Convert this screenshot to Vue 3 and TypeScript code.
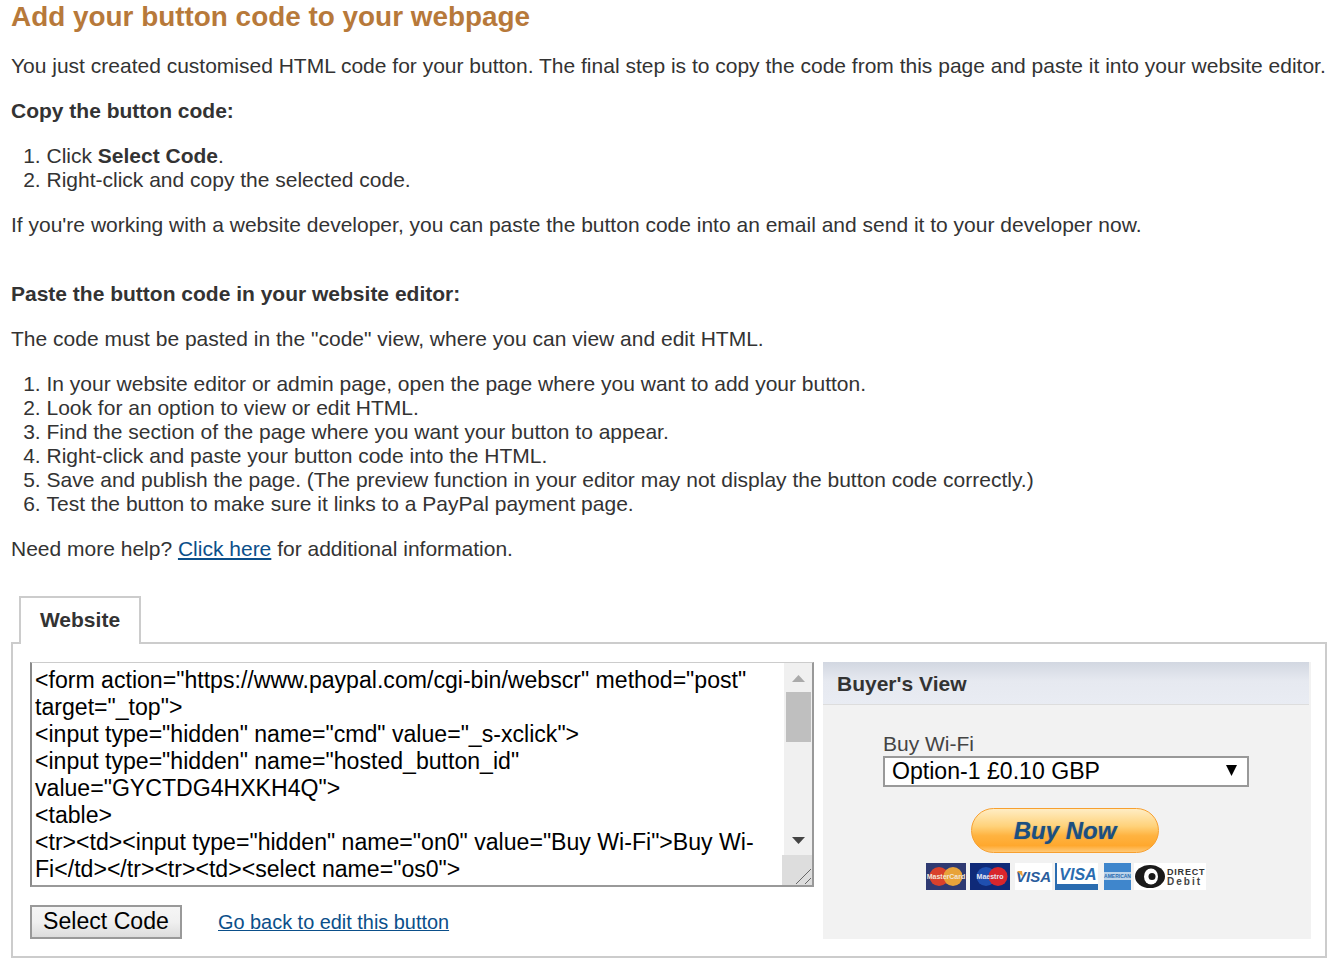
<script setup lang="ts">
const editorSteps: string[] = [
  'In your website editor or admin page, open the page where you want to add your button.',
  'Look for an option to view or edit HTML.',
  'Find the section of the page where you want your button to appear.',
  'Right-click and paste your button code into the HTML.',
  'Save and publish the page. (The preview function in your editor may not display the button code correctly.)',
  'Test the button to make sure it links to a PayPal payment page.',
]
const codeLines: string[] = [
  '<form action="https://www.paypal.com/cgi-bin/webscr" method="post"',
  'target="_top">',
  '<input type="hidden" name="cmd" value="_s-xclick">',
  '<input type="hidden" name="hosted_button_id"',
  'value="GYCTDG4HXKH4Q">',
  '<table>',
  '<tr><td><input type="hidden" name="on0" value="Buy Wi-Fi">Buy Wi-',
  'Fi</td></tr><tr><td><select name="os0">',
]
</script>

<template>
  <main class="page">
    <h1 class="title">Add your button code to your webpage</h1>
    <p>You just created customised HTML code for your button. The final step is to copy the code from this page and paste it into your website editor.</p>
    <p><strong>Copy the button code:</strong></p>
    <ol>
      <li>Click <strong>Select Code</strong>.</li>
      <li>Right-click and copy the selected code.</li>
    </ol>
    <p class="gap-after">If you're working with a website developer, you can paste the button code into an email and send it to your developer now.</p>
    <p><strong>Paste the button code in your website editor:</strong></p>
    <p>The code must be pasted in the "code" view, where you can view and edit HTML.</p>
    <ol>
      <li v-for="step in editorSteps" :key="step">{{ step }}</li>
    </ol>
    <p>Need more help? <a href="#">Click here</a> for additional information.</p>

    <div class="tabs"><div class="tab">Website</div></div>
    <section class="box">
      <div class="left">
        <div class="code">
          <div class="code-text">
            <div v-for="line in codeLines" :key="line">{{ line }}</div>
          </div>
          <div class="scrollbar">
            <svg class="arrow-up" width="13" height="7" viewBox="0 0 13 7"><path d="M6.5 0L13 7H0z" fill="#aaa" /></svg>
            <div class="thumb"></div>
            <svg class="arrow-down" width="13" height="7" viewBox="0 0 13 7"><path d="M0 0h13L6.500 7z" fill="#444" /></svg>
            <div class="resizer">
              <svg width="30" height="30" viewBox="0 0 30 30">
                <path d="M14 29L29 14M23 29l6-6" stroke="#666" stroke-width="1" fill="none" />
              </svg>
            </div>
          </div>
        </div>
        <div class="actions">
          <button class="select-btn" type="button">Select Code</button>
          <a class="back" href="#">Go back to edit this button</a>
        </div>
      </div>
      <aside class="buyer">
        <h2 class="buyer-head">Buyer's View</h2>
        <div class="buyer-body">
          <div class="buy-label">Buy Wi-Fi</div>
          <div class="select">
            <span>Option-1 £0.10 GBP</span>
            <svg width="11" height="11" viewBox="0 0 11 11"><path d="M0 0h11L5.500 11z" fill="#000" /></svg>
          </div>
          <div class="buy-now"><span>Buy Now</span></div>
          <svg class="cards" width="280" height="27" viewBox="0 0 280 27">
            <g>
              <rect width="40" height="27" fill="#2f3a72" />
              <circle cx="13" cy="13.500" r="9.500" fill="#d9412c" />
              <circle cx="27" cy="13.500" r="9.500" fill="#e8a33a" />
              <text x="20" y="16" text-anchor="middle" font-size="7" font-weight="700" fill="#f3e6d8" font-family="Liberation Sans">MasterCard</text>
            </g>
            <g transform="translate(44 0)">
              <rect width="40" height="27" fill="#0f2a78" />
              <circle cx="16" cy="13.500" r="9.500" fill="#1f4fb0" />
              <circle cx="28" cy="13.500" r="9.500" fill="#d8262c" />
              <text x="20" y="16" text-anchor="middle" font-size="7" font-weight="700" fill="#e6e6f0" font-family="Liberation Sans">Maestro</text>
            </g>
            <g transform="translate(89 0)">
              <rect width="37" height="27" fill="#fff" />
              <text x="18.500" y="19" text-anchor="middle" font-size="15" font-weight="700" font-style="italic" fill="#2a5d9c" font-family="Liberation Sans">VISA</text>
              <path d="M2 8L7 8L8 14z" fill="#e9a23a" />
            </g>
            <g transform="translate(129 0)">
              <rect width="43" height="27" fill="#fff" />
              <path d="M1 0v26h42" stroke="#2a6cb0" stroke-width="2" fill="none" />
              <rect x="1" y="21" width="42" height="6" fill="#2a6cb0" />
              <text x="23" y="17" text-anchor="middle" font-size="16" font-weight="700" font-style="italic" fill="#2a6cb0" font-family="Liberation Sans">VISA</text>
            </g>
            <g transform="translate(178 0)">
              <rect width="27" height="27" fill="#3f86cc" />
              <rect y="9" width="27" height="8" fill="#bcd4ea" />
              <text x="13.500" y="15" text-anchor="middle" font-size="5" font-weight="700" fill="#2a6cb0" font-family="Liberation Sans">AMERICAN</text>
            </g>
            <g transform="translate(208 0)">
              <rect width="72" height="27" fill="#fff" />
              <ellipse cx="16" cy="13.500" rx="15" ry="11.500" fill="#1a1a1a" />
              <ellipse cx="17" cy="13.500" rx="7" ry="8" fill="#fff" />
              <circle cx="18" cy="13.500" r="3.500" fill="#1a1a1a" />
              <text x="33" y="12" font-size="9" font-weight="700" letter-spacing="0.800" fill="#333" font-family="Liberation Sans">DIRECT</text>
              <text x="33" y="22" font-size="10" font-weight="700" letter-spacing="2" fill="#444" font-family="Liberation Sans">Debit</text>
            </g>
          </svg>
        </div>
      </aside>
    </section>
  </main>
</template>

<style>
html, body { margin: 0; background: #fff; }
</style>

<style scoped>
.page {
  width: 1316px;
  margin-left: 11px;
  font-family: "Liberation Sans", Arial, sans-serif;
  font-size: 21px;
  line-height: 24px;
  color: #333;
}
.title {
  margin: 0 0 21px;
  height: 33px;
  line-height: 33px;
  font-size: 27.900px;
  font-weight: 700;
  color: #b7793a;
}
p { margin: 0 0 21px; }
.gap-after { margin-bottom: 45px; }
ol { margin: 0 0 21px; padding: 0 0 0 35.500px; }
a { color: #0b4f8a; text-decoration: underline; }
.tabs { display: flex; padding: 14px 0 0 8px; margin-top: 21px; }
.tab {
  width: 118px;
  height: 46px;
  border: 2px solid #ccc;
  border-bottom: 0;
  background: #fff;
  margin-bottom: -2px;
  position: relative;
  z-index: 1;
  box-sizing: content-box;
  font-weight: 700;
  font-size: 21px;
  line-height: 43px;
  text-align: center;
}
.box {
  box-sizing: border-box;
  width: 1316px;
  height: 316px;
  border: 2px solid #ccc;
  padding: 18px 14px 17px 17px;
  display: flex;
  gap: 9px;
}
.left { width: 784px; display: flex; flex-direction: column; }
.code {
  box-sizing: border-box;
  height: 225px;
  display: flex;
  border-style: solid;
  border-width: 1px 2px 2px 2px;
  border-color: #ccc #999 #999 #8a8a8a;
  overflow: hidden;
}
.code-text {
  flex: 1;
  padding: 4px 0 0 3px;
  font-size: 23.100px;
  line-height: 27px;
  color: #000;
  white-space: pre;
  overflow: hidden;
}
.scrollbar {
  width: 28px;
  background: #f0f0f0;
  position: relative;
  flex: none;
}
.arrow-up { position: absolute; left: 8px; top: 12px; }
.arrow-down { position: absolute; left: 8px; top: 174px; }
.thumb {
  position: absolute;
  left: 2px;
  top: 29px;
  width: 25px;
  height: 50px;
  background: #bfbfbf;
}
.resizer {
  position: absolute;
  right: 0;
  bottom: 0;
  width: 30px;
  height: 30px;
  background: #ddd;
}
.resizer svg { display: block; }
.actions {
  display: flex;
  align-items: center;
  gap: 36px;
  margin-top: 18px;
}
.select-btn {
  box-sizing: border-box;
  width: 152px;
  height: 34px;
  padding: 0 0 2px;
  border: 2px solid #999;
  border-radius: 0;
  background: linear-gradient(#f5f5f5, #f0f0f0 50%, #dcdcdc);
  font-family: inherit;
  font-size: 23.100px;
  color: #000;
}
.back { font-size: 19.900px; }
.buyer {
  width: 488px;
  background: #f2f2f2;
  display: flex;
  flex-direction: column;
}
.buyer-head {
  box-sizing: border-box;
  margin: 0 2px 0 0;
  height: 43px;
  padding: 10px 0 0 14px;
  background: linear-gradient(#d2d7e1, #e6e9f0 45%, #e9ecf3);
  border-bottom: 1px solid #ddd;
  font-size: 21px;
  line-height: 24px;
}
.buyer-body {
  display: flex;
  flex-direction: column;
  align-items: flex-start;
  padding: 27px 0 0 60px;
}
.buy-label { font-size: 21px; line-height: 23px; color: #444; height: 23px; margin-bottom: 1px; }
.select {
  box-sizing: border-box;
  width: 366px;
  height: 31px;
  border: 2px solid #999;
  background: #fff;
  display: flex;
  align-items: center;
  justify-content: space-between;
  padding: 0 10px 2px 7px;
  font-size: 23.100px;
  color: #000;
}
.buy-now {
  box-sizing: border-box;
  width: 188px;
  height: 45px;
  margin: 21px 0 0 88px;
  border: 1.500px solid #f7a030;
  border-radius: 23px;
  background: linear-gradient(#ffedc4, #ffd27a 40%, #ffb340 62%, #ffa82e 85%, #ffc978);
  display: flex;
  align-items: center;
  justify-content: center;
}
.buy-now span {
  font-size: 24px;
  font-weight: 700;
  font-style: italic;
  color: #1c4f80;
  text-shadow: 0 0 1px rgba(28, 79, 128, 0.6);
}
.cards { margin: 10px 0 0 43px; display: block; }
</style>
